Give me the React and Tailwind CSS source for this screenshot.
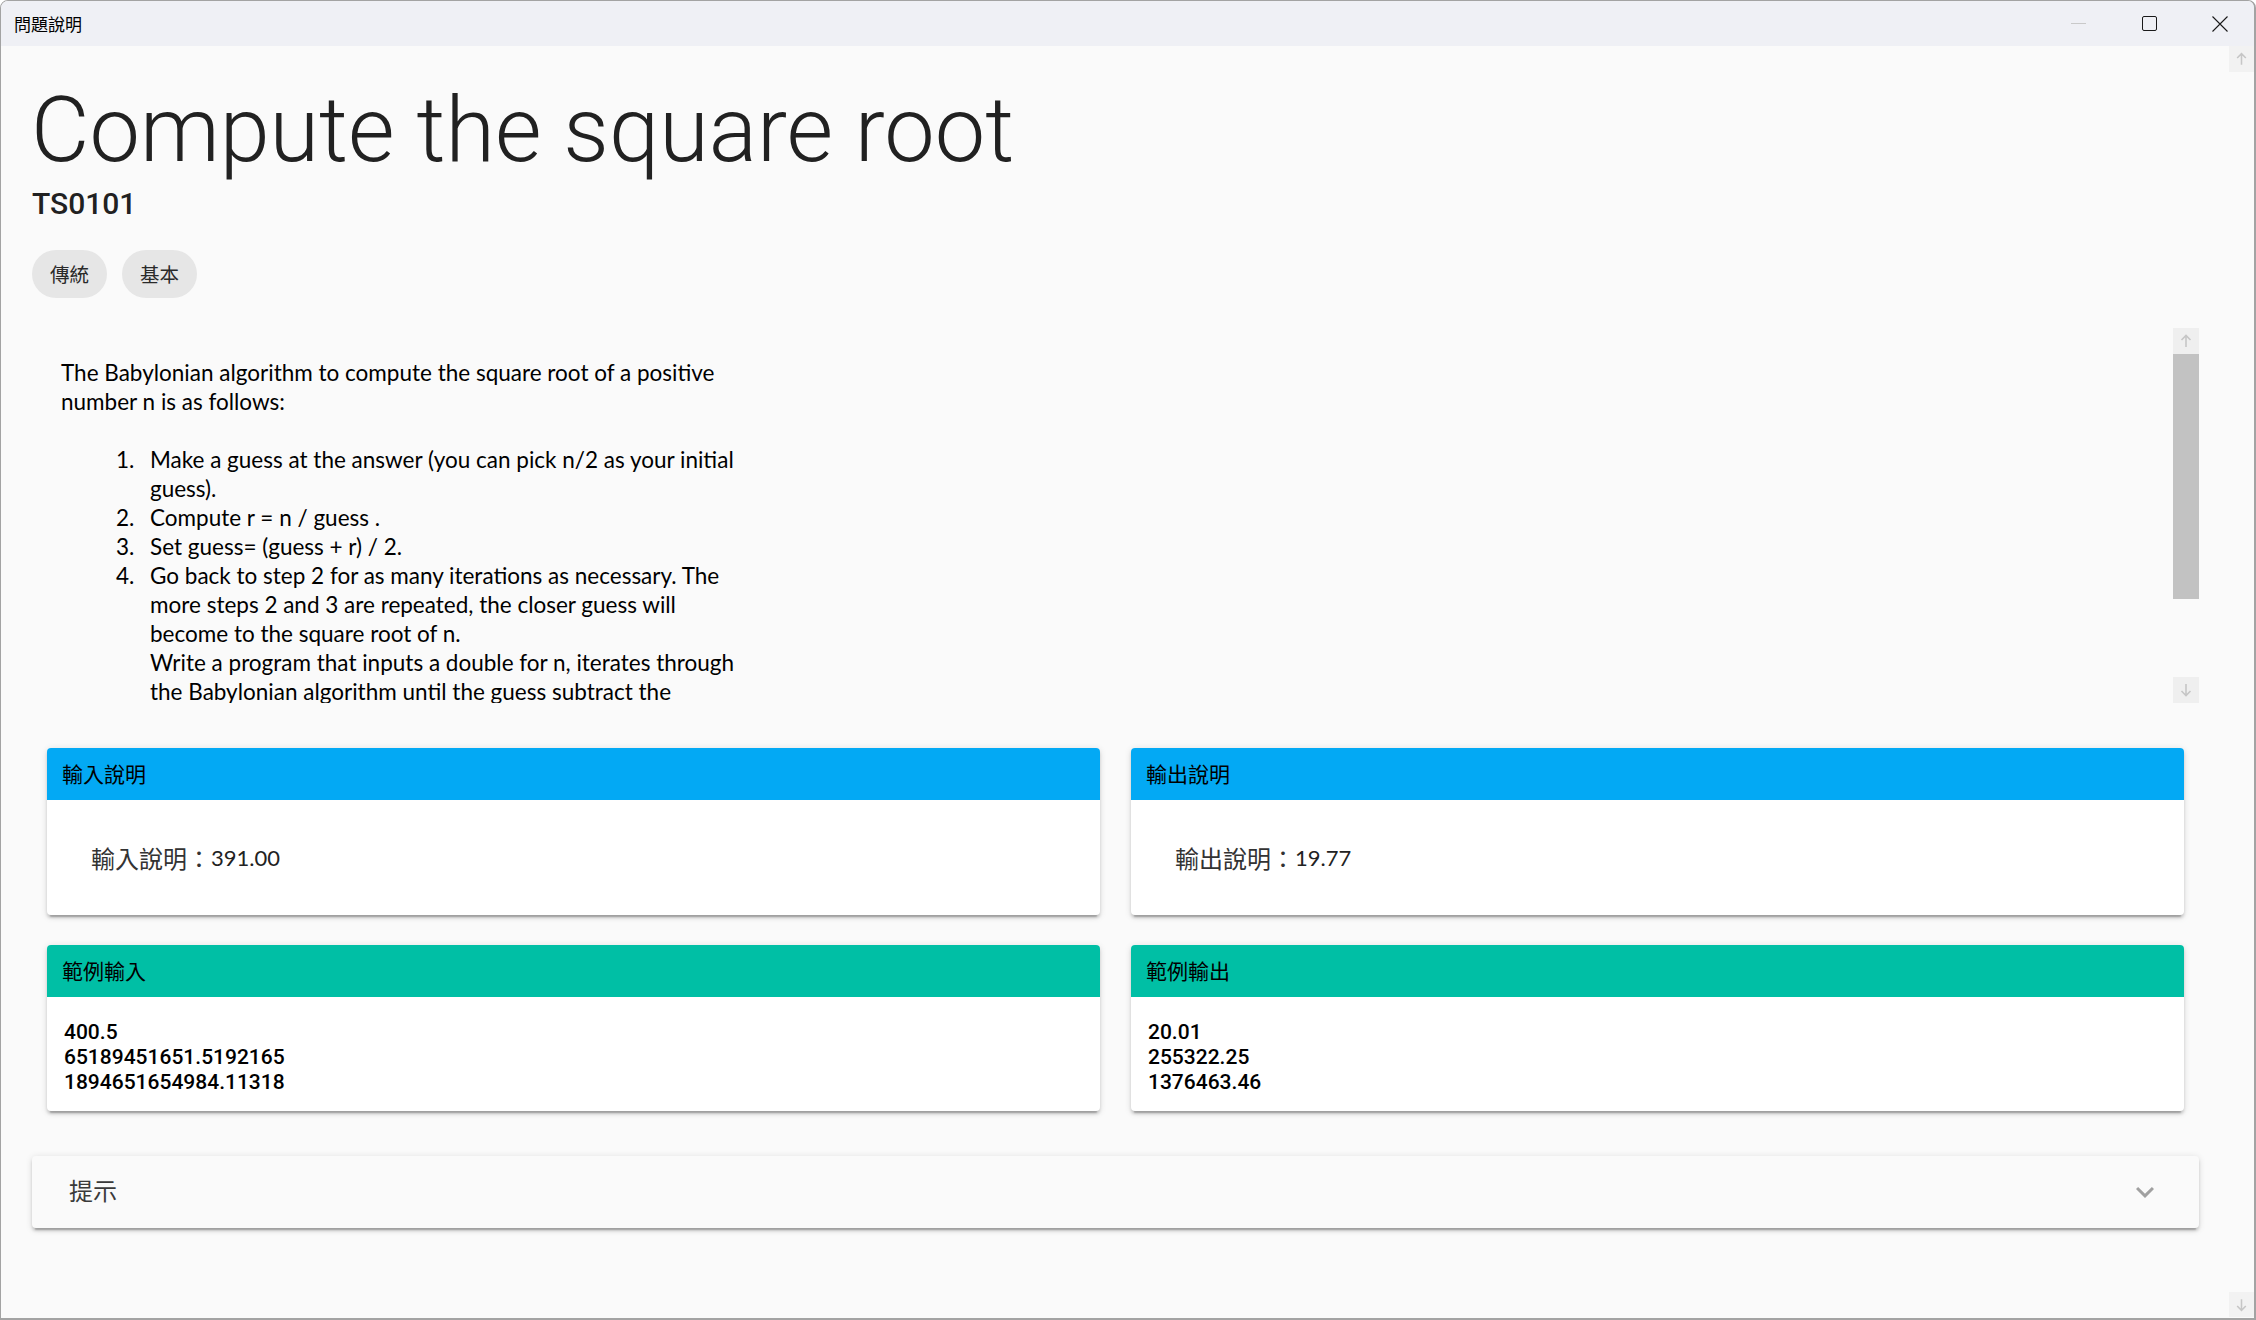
import React from "react";

const cjk = "font-['Noto_Sans_CJK_TC',sans-serif]";

function ArrowUp() {
  return (
    <svg width="26" height="26" viewBox="0 0 26 26" fill="none">
      <path d="M13 19V7.5M8.5 12L13 7.5L17.5 12" stroke="#c6c6c6" strokeWidth="1.6" />
    </svg>
  );
}
function ArrowDown() {
  return (
    <svg width="26" height="26" viewBox="0 0 26 26" fill="none">
      <path d="M13 7V18.5M8.5 14L13 18.5L17.5 14" stroke="#c6c6c6" strokeWidth="1.6" />
    </svg>
  );
}

function InfoCard({ title, color, children }) {
  return (
    <div className="rounded-[4px] overflow-hidden bg-white shadow-[0_4.5px_1.5px_-3px_rgba(0,0,0,0.2),0_3px_3px_0_rgba(0,0,0,0.14),0_1.5px_7.5px_0_rgba(0,0,0,0.12)]">
      <div className={`h-[52px] flex items-center pl-[15px] text-[21px] text-black ${color} ${cjk}`}>{title}</div>
      {children}
    </div>
  );
}

const lines = {
  p: ["The Babylonian algorithm to compute the square root of a positive", "number n is as follows:"],
  list: [
    ["Make a guess at the answer (you can pick n/2 as your initial", "guess)."],
    ["Compute r = n / guess ."],
    ["Set guess= (guess + r) / 2."],
    [
      "Go back to step 2 for as many iterations as necessary. The",
      "more steps 2 and 3 are repeated, the closer guess will",
      "become to the square root of n.",
      "Write a program that inputs a double for n, iterates through",
      "the Babylonian algorithm until the guess subtract the",
    ],
  ],
};

export default function App() {
  return (
    <div className="w-[2256px] h-[1320px] bg-white overflow-hidden">
      <div className="w-full h-full flex flex-col border border-[#a3a3a3] border-r-2 border-b-2 rounded-t-[8px] overflow-hidden bg-[#fafafa]">
        {/* title bar */}
        <div className="h-[45px] shrink-0 bg-[#eff0f5] flex items-center">
          <div className={`pl-[13px] text-[17px] text-black flex-1 ${cjk}`}>問題說明</div>
          <div className="flex h-full">
            <div className="w-[69px] h-full flex items-center justify-center">
              <div className="w-[15px] h-px bg-[#c9c9c9]" />
            </div>
            <div className="w-[73px] h-full flex items-center justify-center">
              <div className="w-[15px] h-[15px] border border-[#1a1a1a] rounded-[2px]" />
            </div>
            <div className="w-[68px] h-full flex items-center justify-center">
              <svg width="16" height="16" viewBox="0 0 16 16">
                <path d="M0.5 0.5L15.5 15.5M15.5 0.5L0.5 15.5" stroke="#1a1a1a" strokeWidth="1.1" />
              </svg>
            </div>
          </div>
        </div>

        {/* body */}
        <div className="flex-1 flex min-h-0">
          <main className="flex-1 pl-[31px] pr-[30px] pt-[31px] min-w-0">
            <h2 className="font-['Roboto',sans-serif] font-light text-[90px] leading-[108px] text-[#212121] -ml-[1px]">
              Compute the square root
            </h2>
            <div className="font-['Roboto',sans-serif] font-medium text-[30px] leading-[36px] text-[#212121] mt-[1px]">TS0101</div>
            <div className="flex gap-[15px] mt-[28px]">
              {["傳統", "基本"].map((t) => (
                <div key={t} className={`h-[48px] px-[18px] rounded-full bg-[#e6e6e6] flex items-center text-[19.5px] text-[#2a2a2a] ${cjk}`}>
                  {t}
                </div>
              ))}
            </div>

            {/* description */}
            <div className="mt-[30px] h-[375px] flex">
              <div className="flex-1 overflow-hidden pt-[30px] pl-[29px] font-['Lato',sans-serif] text-[22.5px] leading-[29px] text-black">
                <div className="mb-[29px]">
                  {lines.p.map((l) => (
                    <div key={l} className="whitespace-nowrap">{l}</div>
                  ))}
                </div>
                {lines.list.map((item, i) => (
                  <div key={i} className="flex">
                    <div className="w-[89px] pl-[55px] shrink-0">{i + 1}.</div>
                    <div>
                      {item.map((l) => (
                        <div key={l} className="whitespace-nowrap">{l}</div>
                      ))}
                    </div>
                  </div>
                ))}
              </div>
              <div className="w-[26px] flex flex-col">
                <div className="h-[26px] bg-[#efefef] flex items-center justify-center"><ArrowUp /></div>
                <div className="h-[245px] bg-[#c2c2c2]" />
                <div className="flex-1" />
                <div className="h-[26px] bg-[#efefef] flex items-center justify-center"><ArrowDown /></div>
              </div>
            </div>

            {/* cards */}
            <div className="mt-[45px] px-[15px] grid grid-cols-2 gap-x-[31px] gap-y-[30px]">
              <InfoCard title="輸入說明" color="bg-[#03a9f4]">
                <div className={`h-[115px] flex items-center pl-[44px] text-[24px] text-[#333] ${cjk}`}>
                  輸入說明：<span className="font-['Lato',sans-serif] text-[22px] text-[#222]">391.00</span>
                </div>
              </InfoCard>
              <InfoCard title="輸出說明" color="bg-[#03a9f4]">
                <div className={`h-[115px] flex items-center pl-[44px] text-[24px] text-[#333] ${cjk}`}>
                  輸出說明：<span className="font-['Lato',sans-serif] text-[22px] text-[#222]">19.77</span>
                </div>
              </InfoCard>
              <InfoCard title="範例輸入" color="bg-[#00bfa5]">
                <div className="pt-[23px] pb-[16px] pl-[17px] font-['Roboto',sans-serif] font-medium text-[21px] leading-[25px] text-black">
                  <div>400.5</div>
                  <div>65189451651.5192165</div>
                  <div>1894651654984.11318</div>
                </div>
              </InfoCard>
              <InfoCard title="範例輸出" color="bg-[#00bfa5]">
                <div className="pt-[23px] pb-[16px] pl-[17px] font-['Roboto',sans-serif] font-medium text-[21px] leading-[25px] text-black">
                  <div>20.01</div>
                  <div>255322.25</div>
                  <div>1376463.46</div>
                </div>
              </InfoCard>
            </div>

            {/* hint */}
            <div className="mt-[45px] h-[72px] rounded-[4px] bg-[#fafafa] flex items-center justify-between pl-[37px] pr-[36px] shadow-[0_4.5px_1.5px_-3px_rgba(0,0,0,0.2),0_3px_3px_0_rgba(0,0,0,0.14),0_1.5px_7.5px_0_rgba(0,0,0,0.12)]">
              <div className={`text-[24px] text-[#3a3a3a] -mt-[4px] ${cjk}`}>提示</div>
              <svg width="36" height="36" viewBox="0 0 24 24">
                <path d="M16.59 8.59L12 13.17 7.41 8.59 6 10l6 6 6-6z" fill="#a0a0a0" />
              </svg>
            </div>
          </main>

          {/* outer scrollbar */}
          <div className="w-[25px] flex flex-col justify-between pb-[1px]">
            <div className="h-[26px] bg-[#f2f2f2] flex items-center justify-center"><ArrowUp /></div>
            <div className="h-[25px] bg-[#f2f2f2] flex items-center justify-center"><ArrowDown /></div>
          </div>
        </div>
      </div>
    </div>
  );
}
